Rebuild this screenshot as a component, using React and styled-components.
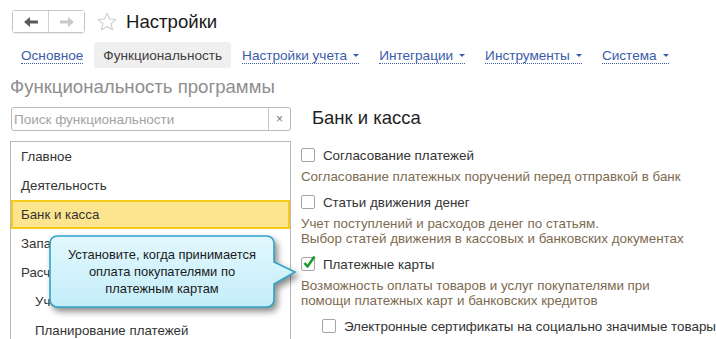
import React from 'react'
import styled, {createGlobalStyle} from 'styled-components'

const GlobalStyle = createGlobalStyle`
  html, body {
    margin: 0;
    padding: 0;
    background: #fff;
    overflow: hidden;
  }
  body {
    font-family: "Liberation Sans", Arial, sans-serif;
    color: #333;
  }
`

const Page = styled.div`
  position: relative;
  width: 716px;
  height: 339px;
  overflow: hidden;
`

const Header = styled.header`
  display: flex;
  align-items: center;
  padding: 10px 0 0 12px;
  height: 23px;
`

const NavGroup = styled.div`
  display: flex;
  height: 21px;
  border: 1px solid #c6c6c6;
  border-radius: 3px;
  box-shadow: 0 1px 1px rgba(0, 0, 0, 0.08);
`

const NavButton = styled.div`
  width: 35px;
  display: flex;
  align-items: center;
  justify-content: center;
  background: #fff;

  & + & {
    border-left: 1px solid #d0d0d0;
  }
`

const Star = styled.svg`
  margin-left: 12px;
`

const Title = styled.h1`
  margin: 0 0 0 9px;
  font-size: 18.6px;
  font-weight: normal;
  color: #1a1a1a;
  line-height: 23px;
`

const Tabs = styled.nav`
  display: flex;
  gap: 2px;
  margin: 9px 0 0 12px;
  height: 26px;
`

const Tab = styled.div`
  display: flex;
  align-items: center;
  padding: 0 9px;
  border-radius: 3px;
  font-size: 13.6px;
  background: ${p => (p.$active ? '#efefef' : 'transparent')};
  color: ${p => (p.$active ? '#404040' : '#3a5caa')};
`

const TabLabel = styled.span`
  display: inline-flex;
  align-items: center;
  gap: 6px;
  line-height: 15px;
  padding-top: 1px;
  border-bottom: ${p => (p.$link ? '1px dotted #3a5caa' : '1px solid transparent')};
`

const Caret = styled.span`
  width: 0;
  height: 0;
  border-left: 3px solid transparent;
  border-right: 3px solid transparent;
  border-top: 3px solid #3a5caa;
  margin-top: 1px;
`

const SectionTitle = styled.h2`
  margin: 8px 0 0 10px;
  font-size: 18.6px;
  line-height: 22px;
  font-weight: normal;
  color: #8e8e8e;
`

const Main = styled.div`
  display: flex;
  gap: 10px;
  margin-top: 9px;
  padding-left: 10px;
`

const Sidebar = styled.aside`
  width: 281px;
  display: flex;
  flex-direction: column;
  gap: 10px;
`

const Search = styled.div`
  display: flex;
  height: 22px;
  margin-left: 1px;
  border: 1px solid #b8b8b8;
  border-radius: 3px;
`

const SearchInput = styled.div`
  flex: 1;
  display: flex;
  align-items: center;
  padding-left: 2px;
  font-size: 13.5px;
  color: #a3a3a3;
`

const ClearButton = styled.div`
  width: 21px;
  display: flex;
  align-items: center;
  justify-content: center;
  border-left: 1px solid #c8c8c8;
  font-size: 12px;
  color: #777;
`

const List = styled.div`
  height: 220px;
  border: 1px solid #b8b8b8;
  border-bottom: none;
`

const ListItem = styled.div`
  height: 29px;
  display: flex;
  align-items: center;
  box-sizing: border-box;
  padding-left: ${p => (p.$indent ? 22 : 8)}px;
  font-size: 13.3px;
  color: #333;
  background: ${p => (p.$selected ? '#fde590' : 'transparent')};
  border: 2px solid ${p => (p.$selected ? '#f6ca1d' : 'transparent')};
`

const Content = styled.section`
  flex: 1;
`

const Heading = styled.h3`
  margin: 0 0 16px 11px;
  font-size: 18.5px;
  line-height: 22px;
  font-weight: normal;
  color: #1f1f1f;
`

const Option = styled.div`
  margin: 0 0 8px ${p => (p.$indent ? 21 : 0)}px;
`

const OptionRow = styled.label`
  display: flex;
  align-items: center;
  gap: 8px;
  height: 20px;
  font-size: 13.4px;
  color: #333;
  white-space: nowrap;
`

const Box = styled.span`
  position: relative;
  width: 14px;
  height: 14px;
  box-sizing: border-box;
  border: 1px solid #a5a5a5;
  border-radius: 2px;
  background: #fff;
  flex: none;
`

const Check = styled.svg`
  position: absolute;
  left: 1px;
  top: -3px;
  overflow: visible;
`

const Hint = styled.div`
  margin-top: 4px;
  font-size: 13.4px;
  line-height: 15px;
  color: #7d6b4f;
  white-space: nowrap;
`

const Callout = styled.div`
  position: absolute;
  left: 48px;
  top: 233px;
  width: 250px;
  height: 82px;
`

const CalloutShape = styled.svg`
  position: absolute;
  inset: 0;
  filter: drop-shadow(3px 4px 3px rgba(0, 0, 0, 0.45));
`

const CalloutText = styled.div`
  position: absolute;
  left: 2px;
  top: 3px;
  width: 224px;
  height: 71px;
  display: flex;
  align-items: center;
  justify-content: center;
  text-align: center;
  font-size: 12.9px;
  line-height: 17px;
  color: #1a1a1a;
`

const tabs = [
  {label: 'Основное'},
  {label: 'Функциональность', active: true},
  {label: 'Настройки учета', menu: true},
  {label: 'Интеграции', menu: true},
  {label: 'Инструменты', menu: true},
  {label: 'Система', menu: true}
]

const sections = [
  {label: 'Главное'},
  {label: 'Деятельность'},
  {label: 'Банк и касса', selected: true},
  {label: 'Запасы и закупки'},
  {label: 'Расчеты с клиентами'},
  {label: 'Учет', indent: true},
  {label: 'Планирование платежей', indent: true}
]

const options = [
  {
    label: 'Согласование платежей',
    hint: ['Согласование платежных поручений перед отправкой в банк']
  },
  {
    label: 'Статьи движения денег',
    hint: ['Учет поступлений и расходов денег по статьям.', 'Выбор статей движения в кассовых и банковских документах']
  },
  {
    label: 'Платежные карты',
    checked: true,
    hint: ['Возможность оплаты товаров и услуг покупателями при', 'помощи платежных карт и банковских кредитов']
  },
  {
    label: 'Электронные сертификаты на социально значимые товары',
    indent: true
  }
]

const Arrow = ({dir, color}) => (
  <svg width="14" height="10" viewBox="0 0 14 10">
    <path
      d="M0 5 L6 0 V3.5 H14 V6.5 H6 V10 Z"
      fill={color}
      transform={dir === 'right' ? 'translate(14 0) scale(-1 1)' : undefined}
    />
  </svg>
)

const Checkbox = ({checked}) => (
  <Box>
    {checked && (
      <Check width="12" height="14" viewBox="0 0 12 14">
        <path d="M1.5 8 L4.5 11.5 L11.5 1.5" fill="none" stroke="#1f9a2e" strokeWidth="2.6" strokeLinejoin="round" />
      </Check>
    )}
  </Box>
)

const App = () => (
  <Page>
    <GlobalStyle />

    <Header>
      <NavGroup>
        <NavButton>
          <Arrow dir="left" color="#5a5a5a" />
        </NavButton>
        <NavButton>
          <Arrow dir="right" color="#c9c9c9" />
        </NavButton>
      </NavGroup>
      <Star width="20" height="20" viewBox="0 0 20 20">
        <path
          d="M10 1.2 L12.6 7 L18.8 7.5 L14.1 11.6 L15.5 17.8 L10 14.5 L4.5 17.8 L5.9 11.6 L1.2 7.5 L7.4 7 Z"
          fill="none"
          stroke="#cfcfcf"
          strokeWidth="1.1"
          strokeLinejoin="round"
        />
      </Star>
      <Title>Настройки</Title>
    </Header>

    <Tabs>
      {tabs.map(t => (
        <Tab key={t.label} $active={t.active}>
          <TabLabel $link={!t.active}>
            {t.label}
            {t.menu && <Caret />}
          </TabLabel>
        </Tab>
      ))}
    </Tabs>

    <SectionTitle>Функциональность программы</SectionTitle>

    <Main>
      <Sidebar>
        <Search>
          <SearchInput>Поиск функциональности</SearchInput>
          <ClearButton>×</ClearButton>
        </Search>
        <List>
          {sections.map(s => (
            <ListItem key={s.label} $selected={s.selected} $indent={s.indent}>
              {s.label}
            </ListItem>
          ))}
        </List>
      </Sidebar>

      <Content>
        <Heading>Банк и касса</Heading>
        {options.map(o => (
          <Option key={o.label} $indent={o.indent}>
            <OptionRow>
              <Checkbox checked={o.checked} />
              {o.label}
            </OptionRow>
            {o.hint && (
              <Hint>
                {o.hint.map(line => (
                  <div key={line}>{line}</div>
                ))}
              </Hint>
            )}
          </Option>
        ))}
      </Content>
    </Main>

    <Callout>
      <CalloutShape width="250" height="82" viewBox="0 0 250 82">
        <defs>
          <linearGradient id="calloutFill" x1="0" y1="0" x2="0" y2="1">
            <stop offset="0" stopColor="#e2f8fe" />
            <stop offset="1" stopColor="#c4edf9" />
          </linearGradient>
        </defs>
        <path
          d="M10 3 H218 Q226 3 226 11 V29 L247 39 L226 51 V66 Q226 74 218 74 H10 Q2 74 2 66 V11 Q2 3 10 3 Z"
          fill="url(#calloutFill)"
          stroke="#2fa4c9"
          strokeWidth="1.6"
        />
      </CalloutShape>
      <CalloutText>
        Установите, когда принимается
        <br />
        оплата покупателями по
        <br />
        платежным картам
      </CalloutText>
    </Callout>
  </Page>
)

export default App
